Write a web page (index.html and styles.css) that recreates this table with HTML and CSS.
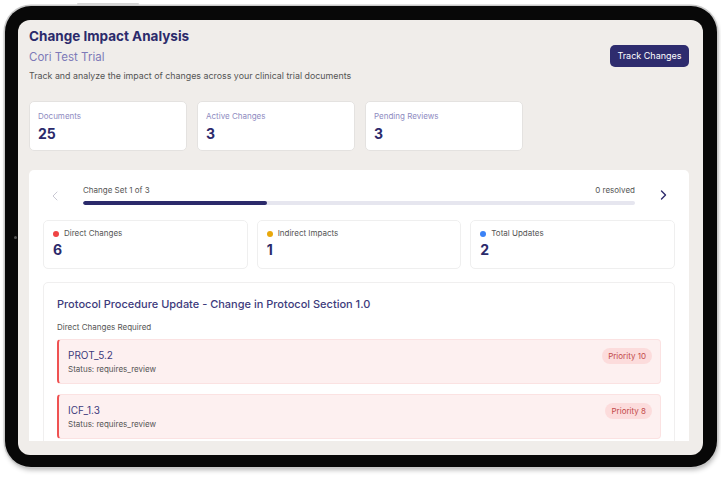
FILE: index.html
```html
<!DOCTYPE html>
<html lang="en">
<head>
<meta charset="utf-8">
<title>Change Impact Analysis</title>
<link rel="stylesheet" href="styles.css">
</head>
<body>
<div class="tablet">
  <span class="hw-button"></span>
  <span class="camera"></span>
  <div class="screen">
    <div class="scroll">
      <header class="page-header">
        <div class="heading">
          <h1 class="title">Change Impact Analysis</h1>
          <div class="subtitle">Cori Test Trial</div>
          <p class="desc">Track and analyze the impact of changes across your clinical trial documents</p>
        </div>
        <button class="btn-primary">Track Changes</button>
      </header>

      <section class="stats">
        <div class="stat-card">
          <div class="stat-label">Documents</div>
          <div class="stat-value">25</div>
        </div>
        <div class="stat-card">
          <div class="stat-label">Active Changes</div>
          <div class="stat-value">3</div>
        </div>
        <div class="stat-card">
          <div class="stat-label">Pending Reviews</div>
          <div class="stat-value">3</div>
        </div>
      </section>

      <section class="panel">
        <div class="carousel">
          <button class="nav nav-prev" aria-label="Previous">
            <svg width="6" height="10" viewBox="0 0 6 10"><polyline points="5,1 1,5 5,9" fill="none" stroke="#c9c8d3" stroke-width="1" stroke-linecap="round" stroke-linejoin="round"/></svg>
          </button>
          <div class="progress-wrap">
            <div class="progress-meta">
              <span>Change Set 1 of 3</span>
              <span>0 resolved</span>
            </div>
            <div class="progress-track"><div class="progress-fill" style="width:33.4%"></div></div>
          </div>
          <button class="nav nav-next" aria-label="Next">
            <svg width="7" height="10" viewBox="0 0 7 10"><polyline points="1.5,1 5.5,5 1.5,9" fill="none" stroke="#2d2b6c" stroke-width="1.4" stroke-linecap="round" stroke-linejoin="round"/></svg>
          </button>
        </div>

        <div class="metrics">
          <div class="metric-card">
            <div class="metric-label"><span class="dot dot-red"></span>Direct Changes</div>
            <div class="metric-value">6</div>
          </div>
          <div class="metric-card">
            <div class="metric-label"><span class="dot dot-amber"></span>Indirect Impacts</div>
            <div class="metric-value">1</div>
          </div>
          <div class="metric-card">
            <div class="metric-label"><span class="dot dot-blue"></span>Total Updates</div>
            <div class="metric-value">2</div>
          </div>
        </div>

        <div class="detail-card">
          <h2 class="detail-title">Protocol Procedure Update - Change in Protocol Section 1.0</h2>
          <div class="section-label">Direct Changes Required</div>
          <div class="change-list">
            <div class="change-item">
              <div class="change-info">
                <div class="change-name">PROT_5.2</div>
                <div class="change-status">Status: requires_review</div>
              </div>
              <span class="badge">Priority 10</span>
            </div>
            <div class="change-item">
              <div class="change-info">
                <div class="change-name">ICF_1.3</div>
                <div class="change-status">Status: requires_review</div>
              </div>
              <span class="badge">Priority 8</span>
            </div>
          </div>
        </div>
      </section>
    </div>
  </div>
</div>
</body>
</html>
```

FILE: styles.css
```css
* { box-sizing: border-box; }

html, body {
  margin: 0;
  padding: 0;
  background: #ffffff;
  width: 721px;
  height: 479px;
  overflow: hidden;
  font-family: "Inter", "Liberation Sans", sans-serif;
}

.tablet {
  position: relative;
  width: 712px;
  height: 461px;
  margin: 6px 0 0 5px;
  padding: 14px 14px 12px 13px;
  background: #080808;
  border-radius: 26px;
  box-shadow: 0 0 0 1.5px #c9c9c9, 1px 3px 5px rgba(0, 0, 0, 0.28);
}

.hw-button {
  position: absolute;
  top: -3px;
  left: 72px;
  width: 62px;
  height: 2px;
  border-radius: 1px;
  background: #d6d6d6;
}

.camera {
  position: absolute;
  left: 9px;
  top: 230px;
  width: 3px;
  height: 3px;
  border-radius: 50%;
  background: #555;
}

.screen {
  height: 100%;
  background: #f0edea;
  border-radius: 12px;
  padding: 0 14px 14px 11px;
  display: flex;
  flex-direction: column;
  overflow: hidden;
}

.scroll {
  flex: 1;
  overflow: hidden;
  padding-top: 6px;
}

/* Header */
.page-header {
  display: flex;
  justify-content: space-between;
  align-items: center;
}

.title {
  margin: 0;
  font-size: 13.5px;
  line-height: 20px;
  font-weight: 700;
  color: #2b2a6b;
}

.subtitle {
  margin-top: 2px;
  font-size: 11.5px;
  line-height: 18px;
  color: #7d7ab8;
}

.desc {
  margin: 3px 0 0;
  font-size: 8.85px;
  line-height: 14px;
  color: #555555;
}

.btn-primary {
  margin-top: 2px;
  width: 79px;
  height: 22px;
  padding: 0;
  border: none;
  border-radius: 5px;
  background: #2e2c6e;
  color: #ffffff;
  font-family: inherit;
  font-size: 9px;
}

/* Stat cards */
.stats {
  display: flex;
  gap: 10px;
  margin-top: 18px;
}

.stat-card {
  width: 158px;
  height: 50px;
  padding: 9px 8px;
  background: #ffffff;
  border: 1px solid #e4e2e0;
  border-radius: 5px;
}

.stat-label {
  font-size: 8px;
  line-height: 11px;
  color: #8e8bbf;
}

.stat-value {
  margin-top: 3px;
  font-size: 14px;
  line-height: 18px;
  font-weight: 700;
  color: #2b2a6b;
}

/* Panel */
.panel {
  margin-top: 19px;
  padding: 14px;
  background: #ffffff;
  border-radius: 5px;
}

.carousel {
  display: grid;
  grid-template-columns: 24px 1fr 24px;
  column-gap: 16px;
  align-items: center;
}

.nav {
  display: flex;
  align-items: center;
  justify-content: center;
  width: 24px;
  height: 20px;
  padding: 0;
  border: none;
  background: transparent;
}

.nav-prev { margin-top: 2px; }

.progress-meta {
  display: flex;
  justify-content: space-between;
  font-size: 8px;
  line-height: 11px;
  color: #555555;
}

.progress-track {
  margin-top: 5px;
  height: 4px;
  border-radius: 2px;
  background: #e6e6ef;
  overflow: hidden;
}

.progress-fill {
  height: 100%;
  border-radius: 2px;
  background: #2b2a6b;
}

/* Metrics */
.metrics {
  display: grid;
  grid-template-columns: repeat(3, 1fr);
  gap: 9px;
  margin-top: 14px;
}

.metric-card {
  height: 49px;
  padding: 7px 9px;
  border: 1px solid #efefef;
  border-radius: 5px;
}

.metric-label {
  display: flex;
  align-items: center;
  gap: 5px;
  font-size: 8px;
  line-height: 11px;
  color: #555555;
}

.dot {
  width: 6px;
  height: 6px;
  border-radius: 50%;
}

.dot-red { background: #ef4444; }
.dot-amber { background: #e8a80c; }
.dot-blue { background: #3b82f6; }

.metric-value {
  margin-top: 2px;
  font-size: 14px;
  line-height: 18px;
  font-weight: 700;
  color: #2b2a6b;
}

/* Detail card */
.detail-card {
  margin-top: 13px;
  padding: 14px 13px 13px;
  border: 1px solid #f0efef;
  border-radius: 5px;
}

.detail-title {
  margin: 0;
  font-size: 11px;
  line-height: 15px;
  font-weight: 500;
  color: #3d3b7c;
}

.section-label {
  margin-top: 10px;
  font-size: 8px;
  line-height: 11px;
  color: #555555;
}

.change-list {
  display: flex;
  flex-direction: column;
  gap: 10px;
  margin-top: 6px;
}

.change-item {
  display: flex;
  justify-content: space-between;
  align-items: flex-start;
  height: 45px;
  padding: 8px 8px 8px 9px;
  background: #fdf0f0;
  border: 1px solid #fbe2e2;
  border-left: 2px solid #ef5252;
  border-radius: 4px;
}

.change-name {
  font-size: 10px;
  line-height: 14px;
  color: #3d3b7c;
}

.change-status {
  margin-top: 2px;
  font-size: 8px;
  line-height: 11px;
  color: #555555;
}

.badge {
  height: 16px;
  padding: 0 6px;
  border-radius: 8px;
  background: #fcdcdc;
  color: #c24a4a;
  font-size: 8px;
  line-height: 16px;
}
```
